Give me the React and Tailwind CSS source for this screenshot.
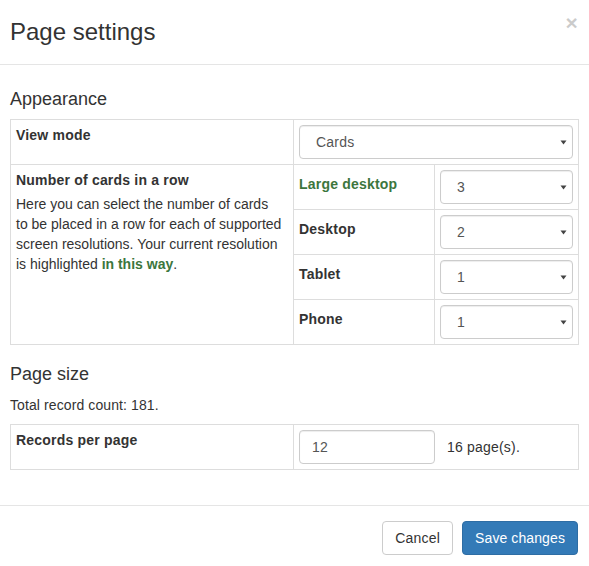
import React from 'react'

const font = { fontFamily: '"Liberation Sans", Arial, sans-serif' }

const Caret = () => (
  <svg className="pointer-events-none absolute right-[6px] top-1/2 -translate-y-1/2" width="7" height="6" viewBox="0 0 7 6">
    <path d="M0.5 1.5h6L3.5 5.5z" fill="#444" />
  </svg>
)

const Select = ({ value, options }) => (
  <div className="relative">
    <select
      defaultValue={value}
      className="block h-[34px] w-full appearance-none rounded-[4px] border border-[#ccc] bg-white pl-4 pr-6 text-[14px] tracking-[0.2px] text-[#555] shadow-[inset_0_1px_1px_rgba(0,0,0,0.075)] outline-none"
    >
      {options.map((o) => (
        <option key={o}>{o}</option>
      ))}
    </select>
    <Caret />
  </div>
)

const App = () => {
  const sizes = [
    { title: 'Large desktop', value: '3', current: true },
    { title: 'Desktop', value: '2' },
    { title: 'Tablet', value: '1' },
    { title: 'Phone', value: '1' },
  ]
  const nums = ['1', '2', '3', '4', '6']
  return (
    <div className="min-h-[566px] w-[589px] bg-white text-[14px] leading-[20px] tracking-[0.2px] text-[#333]" style={font}>
      {/* header */}
      <div className="flex h-[65px] items-start justify-between border-b border-[#e5e5e5] pl-[10px] pr-[11px]">
        <h3 className="mt-[18px] text-[24px] leading-[28px] tracking-normal text-[#333]">Page settings</h3>
        <button type="button" className="mt-[11px] text-[21px] font-bold leading-[24px] text-black opacity-20">×</button>
      </div>

      {/* body */}
      <div className="px-[10px]">
        <h4 className="mt-[23px] mb-[9px] text-[18px] leading-[22px] tracking-normal">Appearance</h4>
        <table className="w-[568px] table-fixed border-collapse">
          <colgroup>
            <col className="w-[283px]" />
            <col className="w-[141px]" />
            <col className="w-[144px]" />
          </colgroup>
          <tbody>
            <tr>
              <td className="h-[45px] border border-[#ddd] p-[5px] align-top font-bold">View mode</td>
              <td colSpan={2} className="border border-[#ddd] p-[5px] align-top">
                <Select value="Cards" options={['Cards', 'Table', 'List']} />
              </td>
            </tr>
            {sizes.map((s, i) => (
              <tr key={s.title}>
                {i === 0 && (
                  <td rowSpan={4} className="border border-[#ddd] p-[5px] align-top">
                    <div className="font-bold">Number of cards in a row</div>
                    <p className="mt-[4px] tracking-normal">
                      Here you can select the number of cards<br />
                      to be placed in a row for each of supported<br />
                      screen resolutions. Your current resolution<br />
                      is highlighted <span className="font-bold text-[#3c763d]">in this way</span>.
                    </p>
                  </td>
                )}
                <td className={`h-[45px] border border-[#ddd] px-[5px] pt-[9px] align-top font-bold ${s.current ? 'text-[#3c763d]' : ''}`}>
                  {s.title}
                </td>
                <td className="border border-[#ddd] p-[5px] align-top">
                  <Select value={s.value} options={nums} />
                </td>
              </tr>
            ))}
          </tbody>
        </table>

        <h4 className="mt-[18px] text-[18px] leading-[22px] tracking-normal">Page size</h4>
        <p className="mt-[10px] tracking-[0.1px]">Total record count: 181.</p>
        <table className="mt-[9px] w-[568px] table-fixed border-collapse">
          <colgroup>
            <col className="w-[283px]" />
            <col className="w-[285px]" />
          </colgroup>
          <tbody>
            <tr>
              <td className="h-[45px] border border-[#ddd] p-[5px] align-top font-bold">Records per page</td>
              <td className="border border-[#ddd] p-[5px] align-top">
                <div className="flex items-center gap-3">
                  <input
                    defaultValue="12"
                    className="h-[34px] w-[136px] rounded-[4px] border border-[#ccc] px-3 text-[14px] tracking-[0.2px] text-[#555] shadow-[inset_0_1px_1px_rgba(0,0,0,0.075)] outline-none"
                  />
                  <span>16 page(s).</span>
                </div>
              </td>
            </tr>
          </tbody>
        </table>
      </div>

      {/* footer */}
      <div className="mt-[35px] flex justify-end gap-[9px] border-t border-[#e5e5e5] px-[11px] pt-[15px] pb-[11px]">
        <button type="button" className="h-[34px] rounded-[4px] border border-[#ccc] bg-white px-3 text-[14px] tracking-[0.2px] text-[#333]">Cancel</button>
        <button type="button" className="h-[34px] rounded-[4px] border border-[#2e6da4] bg-[#337ab7] px-3 text-[14px] tracking-[0.1px] text-white">Save changes</button>
      </div>
    </div>
  )
}

export default App
